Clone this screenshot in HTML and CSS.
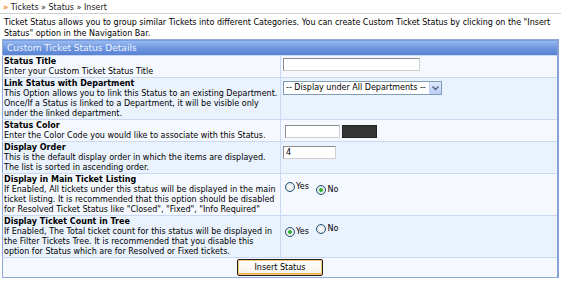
FILE: index.html
```html
<!DOCTYPE html>
<html lang="en">
<head>
    <meta charset="UTF-8">
    <title>Insert Ticket Status</title>
    <link rel="stylesheet" href="styles.css">
</head>
<body>
    <div class="crumb"><span class="arrows">&raquo;</span> Tickets &raquo; Status &raquo; Insert</div>
    <div class="intro">Ticket Status allows you to group similar Tickets into different Categories. You can create Custom Ticket Status by clicking on the "Insert Status" option in the Navigation Bar.</div>

    <table class="form">
        <tr>
            <th colspan="2">Custom Ticket Status Details</th>
        </tr>
        <tr class="light">
            <td class="label"><b>Status Title</b><br>Enter your Custom Ticket Status Title</td>
            <td class="field"><input type="text" class="txt wide"></td>
        </tr>
        <tr class="dark">
            <td class="label"><b>Link Status with Department</b><br>This Option allows you to link this Status to an existing Department. Once/If a Status is linked to a Department, it will be visible only under the linked department.</td>
            <td class="field">
                <div class="select">
                    <span>-- Display under All Departments --</span>
                    <span class="drop"><svg width="7" height="5" viewBox="0 0 7 5"><path d="M0.5 0.5 L3.5 3.5 L6.5 0.5" fill="none" stroke="#4d6185" stroke-width="1.4"/></svg></span>
                </div>
            </td>
        </tr>
        <tr class="light">
            <td class="label"><b>Status Color</b><br>Enter the Color Code you would like to associate with this Status.</td>
            <td class="field"><div class="colorpick"><input type="text" class="txt color"><span class="swatch"></span></div></td>
        </tr>
        <tr class="dark">
            <td class="label"><b>Display Order</b><br>This is the default display order in which the items are displayed. The list is sorted in ascending order.</td>
            <td class="field"><input type="text" class="txt short" value="4"></td>
        </tr>
        <tr class="light">
            <td class="label"><b>Display in Main Ticket Listing</b><br>If Enabled, All tickets under this status will be displayed in the main ticket listing. It is recommended that this option should be disabled for Resolved Ticket Status like "Closed", "Fixed", "Info Required"</td>
            <td class="field">
                <label class="opt"><input type="radio" name="main"> Yes</label>
                <label class="opt"><input type="radio" name="main" checked> No</label>
            </td>
        </tr>
        <tr class="dark">
            <td class="label"><b>Display Ticket Count in Tree</b><br>If Enabled, The Total ticket count for this status will be displayed in the Filter Tickets Tree. It is recommended that you disable this option for Status which are for Resolved or Fixed tickets.</td>
            <td class="field">
                <label class="opt"><input type="radio" name="tree" checked> Yes</label>
                <label class="opt"><input type="radio" name="tree"> No</label>
            </td>
        </tr>
        <tr class="light">
            <td colspan="2" class="submit"><button>Insert Status</button></td>
        </tr>
    </table>
</body>
</html>
```

FILE: styles.css
```css
body {
    margin: 0;
    font-family: 'DejaVu Sans', sans-serif;
    font-size: 8px;
    color: #000;
    background-color: #fff;
}

.crumb {
    padding: 3px 3px 0;
    height: 10px;
    line-height: 10px;
    border-bottom: 1px solid #cfcfcf;
    color: #222;
}

.arrows {
    color: #f08a1c;
    font-weight: bold;
}

.intro {
    padding: 3px 4px 0;
    line-height: 11px;
}

.form {
    margin: 0 2px;
    width: 557px;
    border-collapse: collapse;
    border: 1px solid #8fa8d6;
    border-right: 2px solid #86a2d8;
}

.form th {
    text-align: left;
    font-weight: normal;
    font-size: 9px;
    color: #eef4ff;
    height: 15px;
    padding: 0 4px;
    background: linear-gradient(#9bbcf2, #6b94de 55%, #5780d3);
}

.form td {
    border-top: 1px solid #c9d9f2;
    vertical-align: top;
    line-height: 10px;
}

.light td {
    background-color: #f5f9ff;
}

.dark td {
    background-color: #eaf2fe;
}

.label {
    width: 275px;
    padding: 1px 1px 0;
    border-right: 1px solid #c9d9f2;
}

.field {
    padding: 1px 2px 0;
}

.txt {
    font-family: 'DejaVu Sans', sans-serif;
    font-size: 8px;
    height: 13px;
    box-sizing: border-box;
    border: 1px solid #8c8c8c;
    border-right-color: #cfcfcf;
    border-bottom-color: #cfcfcf;
    background: #fff;
    padding: 0 2px;
    margin: 0;
    display: block;
}

.wide {
    width: 137px;
    margin-top: 1px;
}

.short {
    width: 53px;
    margin-top: 3px;
}

.colorpick {
    display: flex;
    gap: 2px;
    padding: 4px 0 0 2px;
}

.color {
    width: 55px;
}

.swatch {
    width: 35px;
    height: 13px;
    background-color: #353535;
    border: 1px solid #222;
    box-sizing: border-box;
}

.select {
    display: inline-flex;
    align-items: center;
    gap: 3px;
    height: 14px;
    box-sizing: border-box;
    border: 1px solid #7f9db9;
    background: #fff;
    padding-left: 2px;
    margin-top: 2px;
    white-space: nowrap;
    font-size: 8px;
}

.drop {
    display: flex;
    align-items: center;
    justify-content: center;
    width: 11px;
    height: 12px;
    background: linear-gradient(#dfe9fb, #bcd0f5);
    border-left: 1px solid #c1d3f8;
}

.opt {
    display: inline-flex;
    align-items: center;
    gap: 1px;
    margin: 7px 3px 0 2px;
}

.opt input {
    appearance: none;
    width: 10px;
    height: 10px;
    margin: 0;
    border: 1px solid #1c5180;
    border-radius: 50%;
    background: radial-gradient(#ffffff, #dcdcd8);
    display: inline-flex;
    align-items: center;
    justify-content: center;
}

.opt input:checked::after {
    content: "";
    width: 4px;
    height: 4px;
    border-radius: 50%;
    background-color: #30b030;
}

.submit {
    text-align: center;
    padding: 1px 0 0;
}

.submit button {
    font-family: 'DejaVu Sans', sans-serif;
    font-size: 8px;
    display: block;
    margin: 0 auto 1px;
    width: 86px;
    height: 17px;
    border: 1px solid #1f1f1f;
    border-radius: 2px;
    box-shadow: inset 0 0 0 1px #f6c979, inset 0 -2px 0 #f0b050;
    background: linear-gradient(#ffffff, #f4f1e6);
    padding: 0;
}
```
